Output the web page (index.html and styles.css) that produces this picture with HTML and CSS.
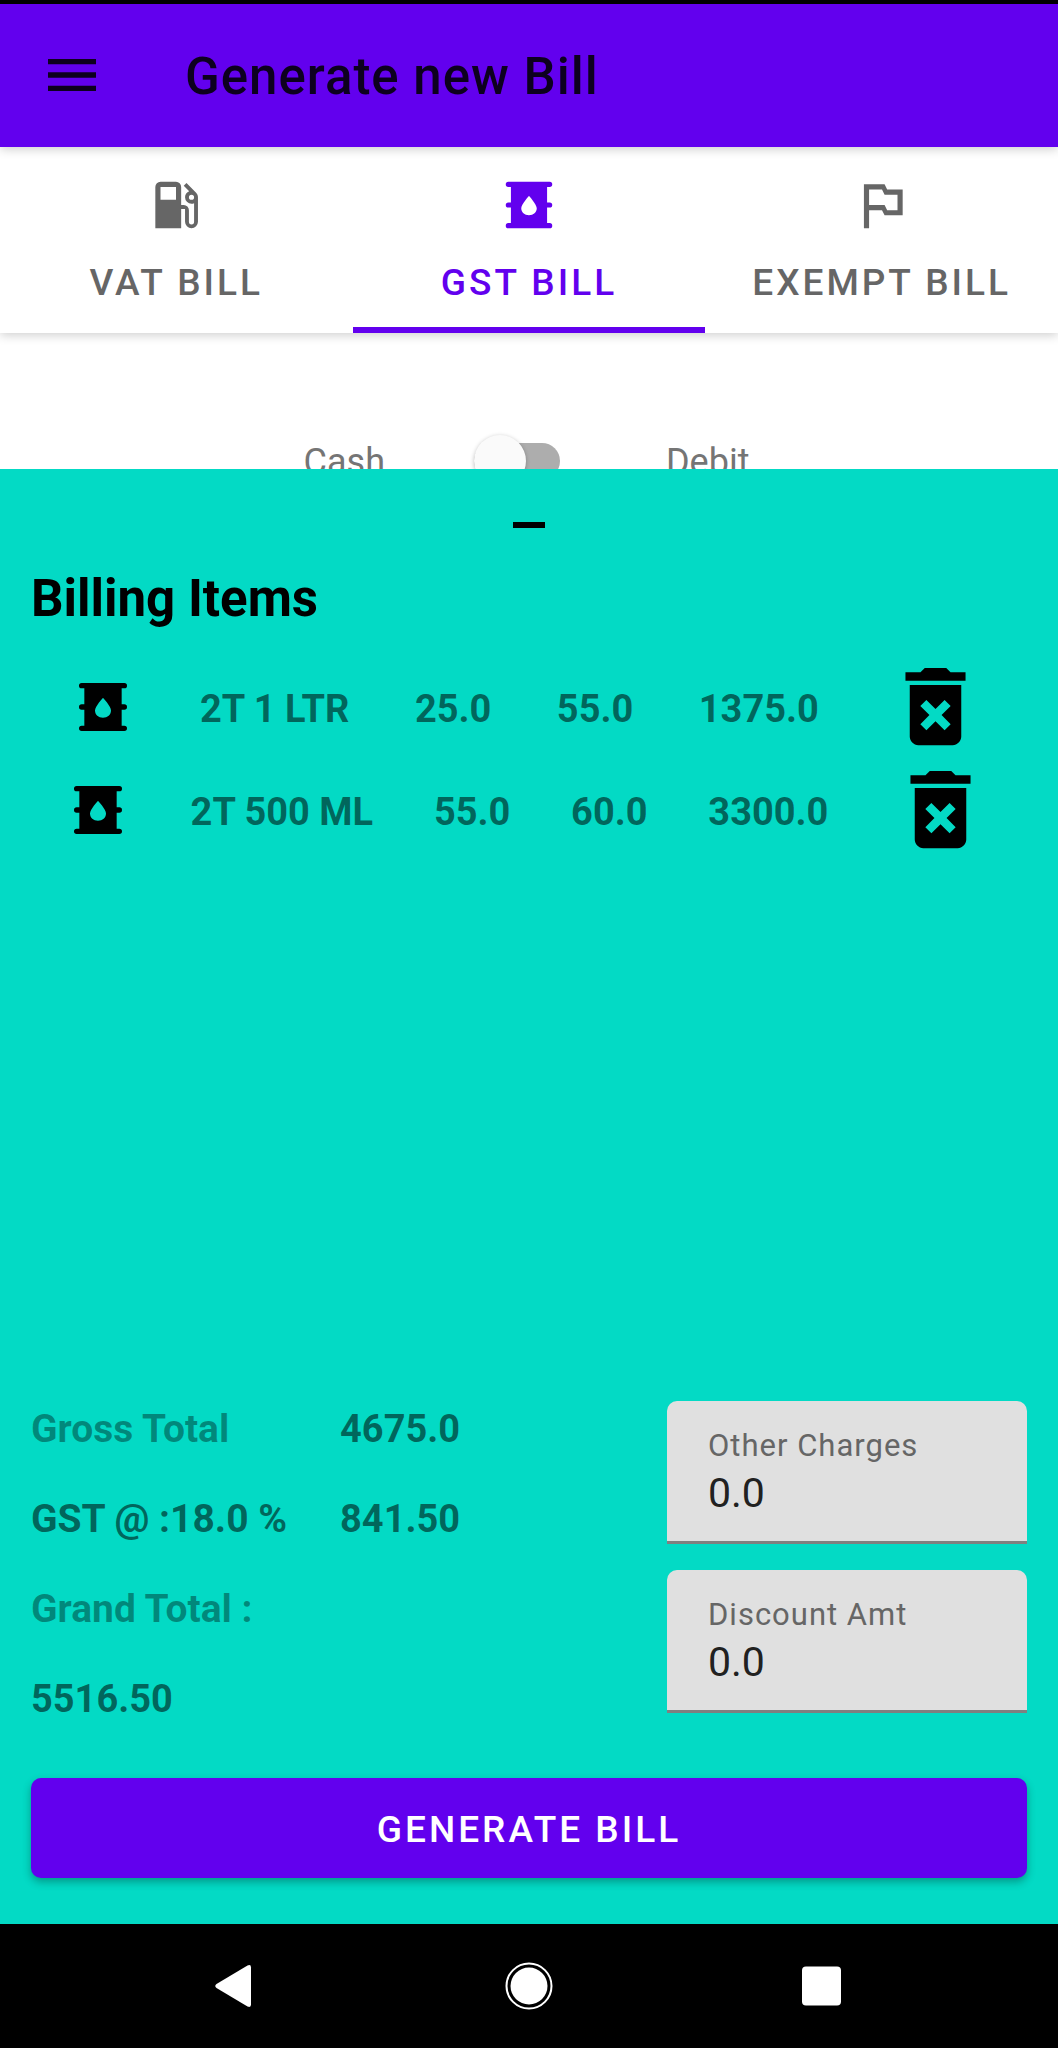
FILE: index.html
```html
<!DOCTYPE html>
<html lang="en">
<head>
<meta charset="utf-8">
<meta name="viewport" content="width=device-width, initial-scale=1">
<title>Generate new Bill</title>
<link rel="stylesheet" href="styles.css">
</head>
<body>
<svg class="sprite" aria-hidden="true">
  <symbol id="barrel" viewBox="0 0 24 24"><path fill-rule="evenodd" d="M4 3H20A1 1 0 0 1 20 5H19V11H20A1 1 0 0 1 20 13H19V19H20A1 1 0 0 1 20 21H4A1 1 0 0 1 4 19H5V13H4A1 1 0 0 1 4 11H5V5H4A1 1 0 0 1 4 3ZM12 8.5C12 8.5 9 11.7 9 13.3C9 14.9 10.300 16 12 16C13.700 16 15 14.900 15 13.300C15 11.700 12 8.500 12 8.500Z"/></symbol>
  <symbol id="trash" viewBox="0 0 24 24"><path d="M6 19c0 1.100.9 2 2 2h8c1.100 0 2-.9 2-2V7H6v12zm2.460-7.120l1.410-1.410L12 12.590l2.120-2.120 1.410 1.410L13.410 14l2.120 2.120-1.410 1.410L12 15.410l-2.120 2.120-1.410-1.410L10.590 14l-2.130-2.120zM15.500 4l-1-1h-5l-1 1H5v2h14V4z"/></symbol>
</svg>

<div class="status-bar"></div>
<header class="app-bar">
  <button class="menu-button" type="button" aria-label="Menu">
    <svg class="icon-large" viewBox="0 0 24 24"><path d="M3 6h18v2H3zM3 11h18v2H3zM3 16h18v2H3z"/></svg>
  </button>
  <h1 class="title">Generate new Bill</h1>
</header>

<nav class="tabs">
  <button class="tab" type="button">
    <svg class="icon" viewBox="0 0 24 24"><path d="M18,10A1,1 0 0,1 17,9A1,1 0 0,1 18,8A1,1 0 0,1 19,9A1,1 0 0,1 18,10M12,10H6V5H12M19.77,7.23L19.78,7.22L16.06,3.5L15,4.56L17.11,6.67C16.17,7 15.5,7.93 15.5,9A2.5,2.5 0 0,0 18,11.5C18.36,11.5 18.69,11.42 19,11.29V18.5A1,1 0 0,1 18,19.5A1,1 0 0,1 17,18.5V14A2,2 0 0,0 15,12H14V5A2,2 0 0,0 12,3H6A2,2 0 0,0 4,5V21H14V13.5H15.5V18.5A2.5,2.5 0 0,0 18,21A2.5,2.5 0 0,0 20.5,18.5V9C20.5,8.31 20.22,7.68 19.77,7.23Z"/></svg>
    <span>VAT BILL</span>
  </button>
  <button class="tab tab-active" type="button">
    <svg class="icon"><use href="#barrel"/></svg>
    <span>GST BILL</span>
  </button>
  <button class="tab" type="button">
    <svg class="icon" viewBox="0 0 24 24"><path d="M14 6l-1-2H5v17h2v-7h5l1 2h7V6h-6zm4 8h-4l-1-2H7V6h5l1 2h5v6z"/></svg>
    <span>EXEMPT BILL</span>
  </button>
</nav>

<section class="payment">
  <label for="mode">Cash</label>
  <input class="switch" id="mode" type="checkbox" role="switch">
  <label for="mode">Debit</label>
</section>

<main class="sheet">
  <div class="handle"></div>
  <h2 class="sheet-title">Billing Items</h2>
  <table class="items">
    <tbody>
      <tr class="item">
        <td><svg class="icon-large"><use href="#barrel"/></svg></td>
        <td class="value">2T 1 LTR</td>
        <td class="value">25.0</td>
        <td class="value">55.0</td>
        <td class="value">1375.0</td>
        <td><button class="delete" type="button" aria-label="Delete 2T 1 LTR"><svg class="delete-icon"><use href="#trash"/></svg></button></td>
      </tr>
      <tr class="item">
        <td><svg class="icon-large"><use href="#barrel"/></svg></td>
        <td class="value">2T 500 ML</td>
        <td class="value">55.0</td>
        <td class="value">60.0</td>
        <td class="value">3300.0</td>
        <td><button class="delete" type="button" aria-label="Delete 2T 500 ML"><svg class="delete-icon"><use href="#trash"/></svg></button></td>
      </tr>
    </tbody>
  </table>

  <div class="summary">
    <div class="totals">
      <span class="muted">Gross Total</span><span class="amount">4675.0</span>
      <span>GST @ :18.0 %</span><span class="amount">841.50</span>
      <span class="muted full">Grand Total :</span>
      <span class="amount full">5516.50</span>
    </div>
    <div class="fields">
      <div class="field">
        <label for="other">Other Charges</label>
        <input id="other" type="text" inputmode="decimal" value="0.0">
      </div>
      <div class="field">
        <label for="discount">Discount Amt</label>
        <input id="discount" type="text" inputmode="decimal" value="0.0">
      </div>
    </div>
  </div>
  <button class="generate" type="button">GENERATE BILL</button>
</main>

<footer class="nav-bar">
  <button class="nav-button" type="button" aria-label="Back">
    <svg class="nav-icon" viewBox="0 0 60 60"><path d="M45 11.500V48.500Q45 52 41.500 50.500L10.500 32Q8 30 10.500 28L41.500 9.500Q45 8 45 11.500Z"/></svg>
  </button>
  <button class="nav-button" type="button" aria-label="Home">
    <svg class="nav-icon" viewBox="0 0 60 60"><circle cx="30" cy="30" r="18.500"/><circle cx="30" cy="30" r="22.500" fill="none" stroke="#fff" stroke-width="2"/></svg>
  </button>
  <button class="nav-button" type="button" aria-label="Recent apps">
    <svg class="nav-icon" viewBox="0 0 60 60"><rect x="10" y="10.500" width="39" height="39" rx="4"/></svg>
  </button>
</footer>
</body>
</html>
```
FILE: styles.css
```css
:root {
  --primary: #6200ee;
  --secondary: #03dac5;
  --ink-medium: rgba(0, 0, 0, 0.54);
  --ink-light: rgba(0, 0, 0, 0.38);
}

* {
  box-sizing: border-box;
}

body {
  margin: 0;
  min-height: 100vh;
  display: flex;
  flex-direction: column;
  background: #fff;
  font-family: Roboto, "Liberation Sans", sans-serif;
}

h1,
h2 {
  margin: 0;
}

button {
  margin: 0;
  padding: 0;
  border: 0;
  background: none;
  color: inherit;
  font: inherit;
  cursor: pointer;
}

svg {
  display: block;
  fill: currentColor;
}

.sprite {
  position: absolute;
  width: 0;
  height: 0;
}

.icon {
  width: 62px;
  height: 62px;
}

.icon-large {
  width: 64px;
  height: 64px;
}

.status-bar {
  height: 4px;
  background: #000;
}

.app-bar {
  position: relative;
  z-index: 2;
  display: flex;
  align-items: center;
  gap: 81px;
  min-height: 143px;
  padding: 0 40px 2px;
  background: var(--primary);
  color: rgba(0, 0, 0, 0.87);
  box-shadow: 0 2px 10px rgba(0, 0, 0, 0.2);
}

.title {
  padding-top: 5px;
  font-size: 51px;
  line-height: 60px;
  font-weight: 500;
  letter-spacing: 1px;
}

.tabs {
  position: relative;
  z-index: 1;
  display: grid;
  grid-template-columns: repeat(3, 1fr);
  background: #fff;
  color: #666;
  box-shadow: 0 2px 10px rgba(0, 0, 0, 0.2);
}

.tab {
  display: flex;
  flex-direction: column;
  align-items: center;
  gap: 26px;
  padding: 27px 0 23px;
  border-bottom: 6px solid transparent;
  font-size: 37px;
  line-height: 42px;
  font-weight: 500;
  letter-spacing: 3px;
  white-space: nowrap;
}

.tab-active {
  border-bottom-color: var(--primary);
  color: var(--primary);
}

.payment {
  display: flex;
  justify-content: center;
  align-items: center;
  gap: 89px;
  padding: 101px 5px 0 0;
  color: #757575;
  font-size: 36px;
  line-height: 52px;
}

.payment label {
  padding-top: 2px;
}

.switch {
  appearance: none;
  width: 86px;
  height: 36px;
  margin: 0 17px 0 0;
  border-radius: 18px;
  background: #adadad;
}

.switch::before {
  content: "";
  display: block;
  width: 52px;
  height: 52px;
  margin-top: -8px;
  border-radius: 50%;
  background: #fafafa;
  box-shadow: 0 1px 4px rgba(0, 0, 0, 0.25);
}

.switch:checked::before {
  margin-left: 34px;
}

/* The sheet slides over the lower edge of the payment row. */
.sheet {
  position: relative;
  flex: 1;
  display: flex;
  flex-direction: column;
  margin-top: -19px;
  padding: 53px 31px 46px;
  background: var(--secondary);
}

.handle {
  align-self: center;
  width: 32px;
  height: 6px;
  background: #000;
}

.sheet-title {
  margin-top: 41px;
  font-size: 51px;
  line-height: 60px;
  font-weight: 700;
}

.items {
  display: block;
  margin: 26px -31px 0;
  color: var(--ink-medium);
  font-size: 38px;
  line-height: 46px;
  font-weight: 700;
}

.items tbody {
  display: block;
}

.item {
  display: flex;
  justify-content: space-evenly;
  align-items: center;
  padding: 0 5px;
}

.item td {
  padding: 0;
}

.item .value {
  padding-top: 4px;
}

.item svg {
  color: #000;
}

.delete {
  display: block;
}

.delete-icon {
  width: 103px;
  height: 103px;
}

.summary {
  display: flex;
  justify-content: space-between;
  margin-top: auto;
}

.totals {
  display: grid;
  grid-template-columns: auto auto;
  align-content: start;
  gap: 44px 53px;
  padding-top: 5px;
  color: var(--ink-medium);
  font-size: 39px;
  line-height: 46px;
  font-weight: 700;
}

.amount {
  font-size: 38px;
}

.full {
  grid-column: 1 / -1;
}

.muted {
  color: var(--ink-light);
}

.fields {
  display: flex;
  flex-direction: column;
  gap: 26px;
  width: 360px;
}

.field {
  display: flex;
  flex-direction: column;
  padding: 25px 41px 22px;
  border-bottom: 3px solid #808080;
  border-radius: 10px 10px 0 0;
  background: #e0e0e0;
}

.field label {
  color: #666;
  font-size: 31px;
  line-height: 40px;
  letter-spacing: 1px;
}

.field input {
  width: 100%;
  height: 53px;
  padding: 0;
  border: 0;
  outline: 0;
  background: none;
  color: #212121;
  font-family: inherit;
  font-size: 41px;
}

.generate {
  height: 100px;
  margin-top: 56px;
  padding-top: 3px;
  border-radius: 10px;
  background: var(--primary);
  color: #fff;
  font-size: 37px;
  font-weight: 500;
  letter-spacing: 3px;
  box-shadow: 0 4px 8px rgba(0, 0, 0, 0.3);
}

.nav-bar {
  display: grid;
  grid-template-columns: repeat(3, 1fr);
  padding: 32px 90px;
  background: #000;
  color: #fff;
}

.nav-button {
  display: flex;
  justify-content: center;
}

.nav-icon {
  width: 60px;
  height: 60px;
}
```
